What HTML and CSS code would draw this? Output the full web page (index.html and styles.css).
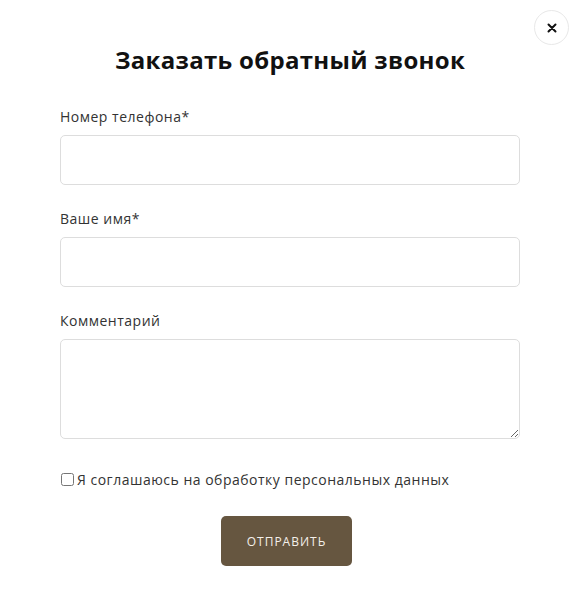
FILE: index.html
```html
<!DOCTYPE html>
<html lang="ru">
<head>
    <meta charset="UTF-8">
    <meta name="viewport" content="width=device-width, initial-scale=1.0">
    <title>Заказать обратный звонок</title>
    <link rel="stylesheet" href="styles.css">
</head>
<body>
    <div class="modal">
        <button class="close" type="button" aria-label="Закрыть">
            <svg width="10" height="10" viewBox="0 0 10 10">
                <path d="M1.5 1.5 L8.5 8.5 M8.5 1.5 L1.5 8.5" stroke="#111" stroke-width="2" stroke-linecap="round"/>
            </svg>
        </button>
        <h1>Заказать обратный звонок</h1>
        <form class="callback-form">
            <label class="field">
                <span class="field-label">Номер телефона*</span>
                <input type="text">
            </label>
            <label class="field">
                <span class="field-label">Ваше имя*</span>
                <input type="text">
            </label>
            <label class="field">
                <span class="field-label">Комментарий</span>
                <textarea></textarea>
            </label>
            <label class="agree">
                <input type="checkbox">
                <span>Я соглашаюсь на обработку персональных данных</span>
            </label>
            <div class="actions">
                <button type="submit" class="submit">Отправить</button>
            </div>
        </form>
    </div>
</body>
</html>
```

FILE: styles.css
```css
body {
    margin: 0;
    background-color: #fff;
    font-family: "Open Sans", "Liberation Sans", sans-serif;
    color: #222;
}

.modal {
    position: relative;
    width: 580px;
    height: 597px;
    box-sizing: border-box;
    padding: 40px 60px 0;
}

.close {
    position: absolute;
    top: 10px;
    right: 11px;
    width: 35px;
    height: 35px;
    border-radius: 50%;
    border: 1px solid #e8e8e8;
    background: #fff;
    display: flex;
    align-items: center;
    justify-content: center;
    padding: 0;
    cursor: pointer;
}

h1 {
    margin: 0 0 27px;
    text-align: center;
    font-size: 24px;
    font-weight: 700;
    line-height: 40px;
    color: #111;
    letter-spacing: 0.3px;
}

.callback-form {
    display: flex;
    flex-direction: column;
}

.field {
    display: flex;
    flex-direction: column;
    margin-bottom: 24px;
}

.field-label {
    font-size: 14px;
    line-height: 20px;
    margin-bottom: 8px;
    color: #333;
    letter-spacing: 0.5px;
}

.field input,
.field textarea {
    box-sizing: border-box;
    width: 460px;
    height: 50px;
    border: 1px solid #ddd;
    border-radius: 5px;
    font-family: inherit;
    font-size: 14px;
    padding: 10px 14px;
    margin: 0;
}

.field textarea {
    height: 100px;
    resize: vertical;
}

.agree {
    display: flex;
    align-items: center;
    font-size: 14px;
    color: #333;
    margin-top: 7px;
    letter-spacing: 0.5px;
}

.agree input {
    width: 13px;
    height: 13px;
    margin: 0 3px 0 1px;
}

.actions {
    display: flex;
    justify-content: center;
    margin-top: 27px;
    padding-right: 7px;
}

.submit {
    width: 131px;
    height: 50px;
    border: none;
    border-radius: 5px;
    background-color: #665640;
    color: #f4f0ea;
    font-family: inherit;
    font-size: 12px;
    text-transform: uppercase;
    letter-spacing: 1px;
    cursor: pointer;
}
```
